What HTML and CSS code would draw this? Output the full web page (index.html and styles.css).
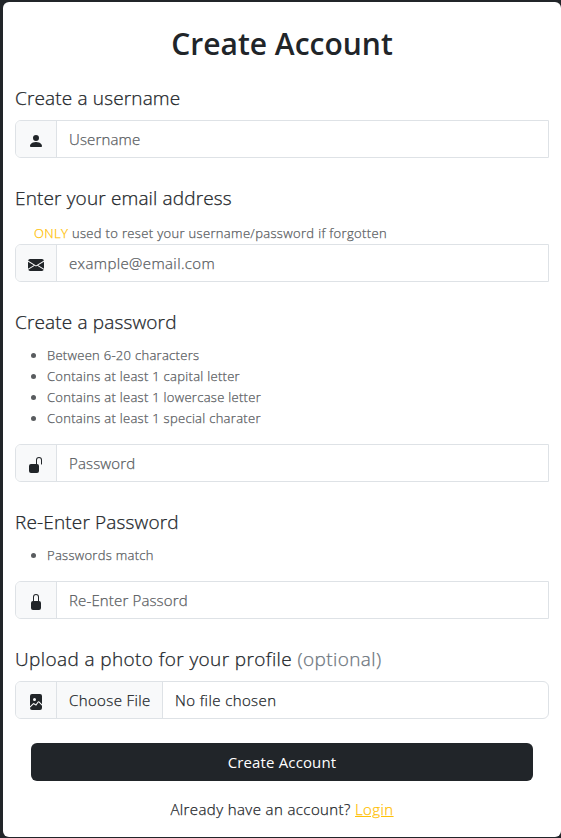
FILE: index.html
```html
<!DOCTYPE html>
<html lang="en">
<head>
<meta charset="utf-8">
<title>Create Account</title>
<link rel="stylesheet" href="styles.css">
</head>
<body>
<main class="card">
  <h1 class="title"><span>Create Account</span></h1>
  <form class="form">
    <section class="field">
      <h2 class="label l-user">Create a username</h2>
      <div class="group">
        <span class="addon"><svg viewBox="0 0 16 16"><path d="M3 14s-1 0-1-1 1-4 6-4 6 3 6 4-1 1-1 1H3Zm5-6a3 3 0 1 0 0-6 3 3 0 0 0 0 6Z"/></svg></span>
        <input class="control p-user" type="text" placeholder="Username">
      </div>
    </section>
    <section class="field">
      <h2 class="label l-email">Enter your email address</h2>
      <p class="note"><span class="accent">ONLY</span> used to reset your username/password if forgotten</p>
      <div class="group">
        <span class="addon"><svg viewBox="0 0 16 16"><path d="M.05 3.555A2 2 0 0 1 2 2h12a2 2 0 0 1 1.95 1.555L8 8.414.05 3.555ZM0 4.697v7.104l5.803-3.558L0 4.697ZM6.761 8.83l-6.57 4.027A2 2 0 0 0 2 14h12a2 2 0 0 0 1.808-1.144l-6.57-4.027L8 9.586l-1.239-.757Zm3.436-.586L16 11.801V4.697l-5.803 3.546Z"/></svg></span>
        <input class="control p-email" type="text" placeholder="example@email.com">
      </div>
    </section>
    <section class="field">
      <h2 class="label l-pass">Create a password</h2>
      <ul class="rules">
        <li>Between 6-20 characters</li>
        <li>Contains at least 1 capital letter</li>
        <li>Contains at least 1 lowercase letter</li>
        <li>Contains at least 1 special charater</li>
      </ul>
      <div class="group">
        <span class="addon"><svg viewBox="0 0 16 16"><path d="M11 1a2 2 0 0 0-2 2v4a2 2 0 0 1 2 2v5a2 2 0 0 1-2 2H3a2 2 0 0 1-2-2V9a2 2 0 0 1 2-2h5V3a3 3 0 0 1 6 0v4a.5.5 0 0 1-1 0V3a2 2 0 0 0-2-2z"/></svg></span>
        <input class="control p-pass" type="password" placeholder="Password">
      </div>
    </section>
    <section class="field">
      <h2 class="label l-again">Re-Enter Password</h2>
      <ul class="rules">
        <li>Passwords match</li>
      </ul>
      <div class="group">
        <span class="addon"><svg viewBox="0 0 16 16"><path d="M8 1a2 2 0 0 1 2 2v4H6V3a2 2 0 0 1 2-2zm3 6V3a3 3 0 0 0-6 0v4a2 2 0 0 0-2 2v5a2 2 0 0 0 2 2h6a2 2 0 0 0 2-2V9a2 2 0 0 0-2-2z"/></svg></span>
        <input class="control p-again" type="password" placeholder="Re-Enter Passord">
      </div>
    </section>
    <section class="field">
      <h2 class="label l-photo">Upload a photo for your profile <span class="muted">(optional)</span></h2>
      <div class="group rounded">
        <span class="addon"><svg viewBox="0 0 16 16"><path d="M4 0h8a2 2 0 0 1 2 2v8.293l-2.73-2.73a1 1 0 0 0-1.52.127l-1.889 2.644-1.769-1.062a1 1 0 0 0-1.222.15L2 12.292V2a2 2 0 0 1 2-2zm4.002 5.5a1.5 1.5 0 1 0-3 0 1.5 1.5 0 0 0 3 0z"/><path d="M10.564 8.27 14 11.708V14a2 2 0 0 1-2 2H4a2 2 0 0 1-2-2v-.293l3.578-3.577 2.56 1.536 2.426-3.395z"/></svg></span>
        <span class="choose">Choose File</span>
        <span class="filename">No file chosen</span>
      </div>
    </section>
    <button class="submit" type="button">Create Account</button>
  </form>
  <p class="footer">Already have an account? <a class="login" href="#">Login</a></p>
</main>
</body>
</html>
```
FILE: styles.css
```css
* { box-sizing: border-box; }

body {
  margin: 0;
  height: 838px;
  padding: 2px 0 1px 3px;
  overflow: hidden;
  background: #212529;
  color: #212529;
  font-family: "Open Sans", "Noto Sans", sans-serif;
  font-size: 15px;
  font-weight: 300;
  line-height: 24px;
  -webkit-text-stroke: 0.25px currentColor;
}

.card {
  height: 835px;
  padding: 23px 12px 0;
  background: #fff;
  border-radius: 6px;
}

.title {
  margin: 0 0 25px;
  font-size: 30px;
  font-weight: 600;
  line-height: 38px;
  text-align: center;
  -webkit-text-stroke: 0;
}

.form { display: flex; flex-direction: column; }
.field { margin-bottom: 30px; }

.label {
  margin: 0 0 12px;
  font-size: 19px;
  font-weight: 300;
  line-height: 20px;
  letter-spacing: 0.15px;
  white-space: nowrap;
}

.l-email { margin-bottom: 15px; }
.l-pass, .l-again { margin-bottom: 13px; }
.l-photo { letter-spacing: 0.39px; }

.muted { color: #6c757d; }
.accent { color: #ffc107; }

.note {
  margin: 0 0 0 19px;
  color: #595c5f;
  font-size: 13px;
  line-height: 21px;
  letter-spacing: 0.34px;
}

.rules {
  margin: 0 0 15px;
  padding-left: 32px;
  color: #595c5f;
  font-size: 13px;
  line-height: 21px;
  letter-spacing: 0.29px;
}

.group {
  display: flex;
  height: 38px;
  overflow: hidden;
  border: 1px solid #dee2e6;
  border-radius: 6px 0 0 6px;
}

.group.rounded { border-radius: 6px; }

.addon {
  display: flex;
  flex: 0 0 41px;
  padding: 12px 12px 0;
  background: #f8f9fa;
  border-right: 1px solid #dee2e6;
}

.addon svg { width: 16px; height: 16px; fill: #212529; stroke: none; }

.control {
  flex: 1;
  min-width: 0;
  padding: 0 12px;
  border: 0;
  outline: 0;
  background: #fff;
  font: inherit;
  letter-spacing: 0.15px;
}

.control::placeholder { color: #595c5f; opacity: 1; }
.p-email { letter-spacing: 0.38px; }

.choose {
  flex: 0 0 106px;
  padding: 6px 0 0 12px;
  background: #f8f9fa;
  border-right: 1px solid #dee2e6;
  letter-spacing: 0.38px;
  white-space: nowrap;
}

.filename { padding: 6px 0 0 12px; letter-spacing: 0.4px; }

.submit {
  height: 38px;
  margin: -6px 16px 0;
  padding: 0;
  border: 0;
  border-radius: 6px;
  background: #212529;
  color: #fff;
  font: inherit;
  font-weight: 400;
  letter-spacing: 0.14px;
  -webkit-text-stroke: 0;
}

.footer { margin: 16px 0 0; text-align: center; letter-spacing: 0.4px; }
.login { color: #ffc107; }
```
